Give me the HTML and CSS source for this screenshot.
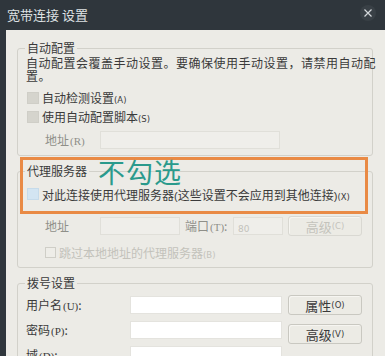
FILE: index.html
```html
<!DOCTYPE html>
<html lang="zh-CN">
<head>
<meta charset="utf-8">
<title>宽带连接 设置</title>
<link rel="stylesheet" href="styles.css">
</head>
<body>
<div class="titlebar">
  <span class="title">宽带连接 设置</span>
  <span class="close">
    <svg width="10" height="10" viewBox="0 0 10 10"><path d="M1.5 1.5 L8.5 8.5 M8.5 1.5 L1.5 8.5" stroke="#d4d8db" stroke-width="1.2" fill="none"/></svg>
  </span>
</div>
<div class="dialog">
  <fieldset class="group g1">
    <legend>自动配置</legend>
    <div class="desc">
      <span class="desc-line">自动配置会覆盖手动设置。要确保使用手动设置，请禁用自动配</span>
      <span class="desc-line">置。</span>
    </div>
    <div class="check-row first"><span class="box gray"></span><span>自动检测设置<small class="mn">(A)</small></span></div>
    <div class="check-row"><span class="box gray"></span><span>使用自动配置脚本<small class="mn">(S)</small></span></div>
    <div class="field-row indent">
      <span class="lbl dis w55">地址<span class="mn2">(R)</span></span>
      <span class="input dis w180"></span>
    </div>
  </fieldset>

  <fieldset class="group g2">
    <legend>代理服务器</legend>
    <div class="check-row first"><span class="box blue"></span><span>对此连接使用代理服务器<span class="par">(</span>这些设置不会应用到其他连接<span class="par">)</span><small class="mn">(X)</small></span></div>
    <div class="field-row indent addr">
      <span class="lbl dis w55">地址</span>
      <span class="input dis w80"></span>
      <span class="lbl dis port">端口<span class="mn2">(T)</span>:</span>
      <span class="input dis w50"><span class="val">80</span></span>
      <span class="btn disabled">高级<small class="mn">(C)</small></span>
    </div>
    <div class="check-row indent skip dis"><span class="box outline"></span><span>跳过本地地址的代理服务器<small class="mn">(B)</small></span></div>
  </fieldset>

  <fieldset class="group g3">
    <legend>拨号设置</legend>
    <div class="dial">
      <div class="fields">
        <span class="lbl">用户名<span class="mn2">(U)</span>:</span><span class="input white"></span>
        <span class="lbl">密码<span class="mn2">(P)</span>:</span><span class="input white"></span>
        <span class="lbl">域<span class="mn2">(D)</span>:</span><span class="input white"></span>
      </div>
      <div class="buttons">
        <span class="btn">属性<small class="mn">(O)</small></span>
        <span class="btn">高级<small class="mn">(V)</small></span>
      </div>
    </div>
  </fieldset>

  <div class="annot-box"></div>
  <div class="annot-text">不勾选</div>
</div>
</body>
</html>
```

FILE: styles.css
```css
html, body {
  margin: 0;
  padding: 0;
}
body {
  width: 385px;
  height: 356px;
  overflow: hidden;
  background: #2f363c;
  font-family: "Noto Sans CJK SC", "Noto Sans", sans-serif;
  font-size: 12px;
  color: #3a3a3a;
}
.titlebar {
  height: 30px;
  display: flex;
  align-items: center;
  justify-content: space-between;
  padding: 0 9px 0 7px;
  box-sizing: border-box;
}
.title {
  color: #dfe2e4;
  font-size: 13px;
  line-height: 16px;
}
.close {
  width: 16px;
  height: 16px;
  border-radius: 50%;
  background: #394046;
  display: flex;
  align-items: center;
  justify-content: center;
  margin-top: -5px;
}
.dialog {
  position: relative;
  margin-left: 6px;
  height: 326px;
  background: #ecebe6;
  padding: 10px 12px 0 11px;
  box-sizing: border-box;
}
.group {
  margin: 0;
  padding: 0 0 6px 8px;
  border: 1px solid #d2d1ca;
  border-radius: 3px;
  min-width: 0;
}
.group + .group {
  margin-top: 7px;
}
legend {
  padding: 0 2px;
  margin-left: -1px;
  line-height: 16px;
  font-size: 12px;
  color: #3a3a3a;
}
.desc {
  display: flex;
  flex-direction: column;
}
.desc-line {
  display: block;
  height: 13px;
  line-height: 13px;
  letter-spacing: 0.5px;
  white-space: nowrap;
}
.check-row {
  display: flex;
  align-items: center;
  gap: 3px;
  height: 19px;
  padding-left: 1px;
  white-space: nowrap;
}
.g1 .check-row.first {
  margin-top: 6px;
}
.g2 .check-row.first {
  margin-top: 6px;
  height: 18px;
}
.box {
  width: 12px;
  height: 12px;
  box-sizing: border-box;
  flex: none;
}
.box.gray {
  background: #d5d4cd;
  border: 1px solid #cfcec7;
}
.box.blue {
  background: #d3e5f2;
  border: 1px solid #c6dbea;
}
.box.outline {
  width: 11px;
  height: 11px;
  border: 1px solid #cfcec7;
  background: #eeede8;
}
.mn {
  font-family: "DejaVu Sans", "Liberation Sans", sans-serif;
  font-size: 8.5px;
}
.mn2 {
  font-family: "Liberation Serif", serif;
  font-size: 11px;
  margin-left: 1px;
}
.par {
  font-family: "Liberation Sans", sans-serif;
  font-size: 11px;
}
.field-row {
  display: flex;
  align-items: center;
  height: 18px;
  margin-top: 5px;
}
.indent {
  padding-left: 19px;
}
.lbl {
  white-space: nowrap;
  line-height: 18px;
}
.dis {
  color: #8f8f89;
}
.w55 { width: 55px; flex: none; }
.input {
  height: 18px;
  box-sizing: border-box;
  display: block;
}
.input.dis {
  background: #efeeea;
  border: 1px solid #e0dfd9;
}
.w180 { width: 180px; }
.w80 { width: 80px; }
.w50 { width: 50px; }
.val {
  color: #c3c2bb;
  font-family: "DejaVu Sans", sans-serif;
  font-size: 9px;
  line-height: 16px;
  padding-left: 4px;
}
.field-row.addr {
  height: 20px;
  margin-top: 13px;
}
.port {
  width: 48px;
  margin-left: 5px;
  flex: none;
}
.btn {
  width: 74px;
  height: 20px;
  box-sizing: border-box;
  display: flex;
  align-items: center;
  justify-content: center;
  border: 1px solid #c9c8c1;
  border-radius: 3px;
  background: #ecebe5;
  box-shadow: inset 1px 1px 0 #f6f5f1;
  font-size: 13px;
  color: #3a3a3a;
  flex: none;
  white-space: nowrap;
}
.field-row .btn {
  margin-left: 5px;
}
.btn.disabled {
  color: #c4c3bc;
  border-color: #d9d8d2;
}
.check-row.skip {
  height: 18px;
  margin-top: 7px;
  color: #c3c2bb;
}
.dial {
  display: flex;
  gap: 6px;
  margin-top: 4px;
}
.fields {
  display: grid;
  grid-template-columns: 104px 152px;
  grid-auto-rows: 18px;
  row-gap: 7px;
  padding-top: 1px;
  align-items: center;
}
.input.white {
  background: #ffffff;
  border: 1px solid #e4e3de;
}
.buttons {
  display: flex;
  flex-direction: column;
  gap: 9px;
}
.annot-box {
  position: absolute;
  left: 14px;
  top: 127px;
  width: 348px;
  height: 57px;
  box-sizing: border-box;
  border: 3px solid #e98a45;
}
.annot-text {
  position: absolute;
  left: 92px;
  top: 127px;
  font-size: 27px;
  line-height: 30px;
  letter-spacing: 1px;
  color: #2a9a8c;
  white-space: nowrap;
}
```
